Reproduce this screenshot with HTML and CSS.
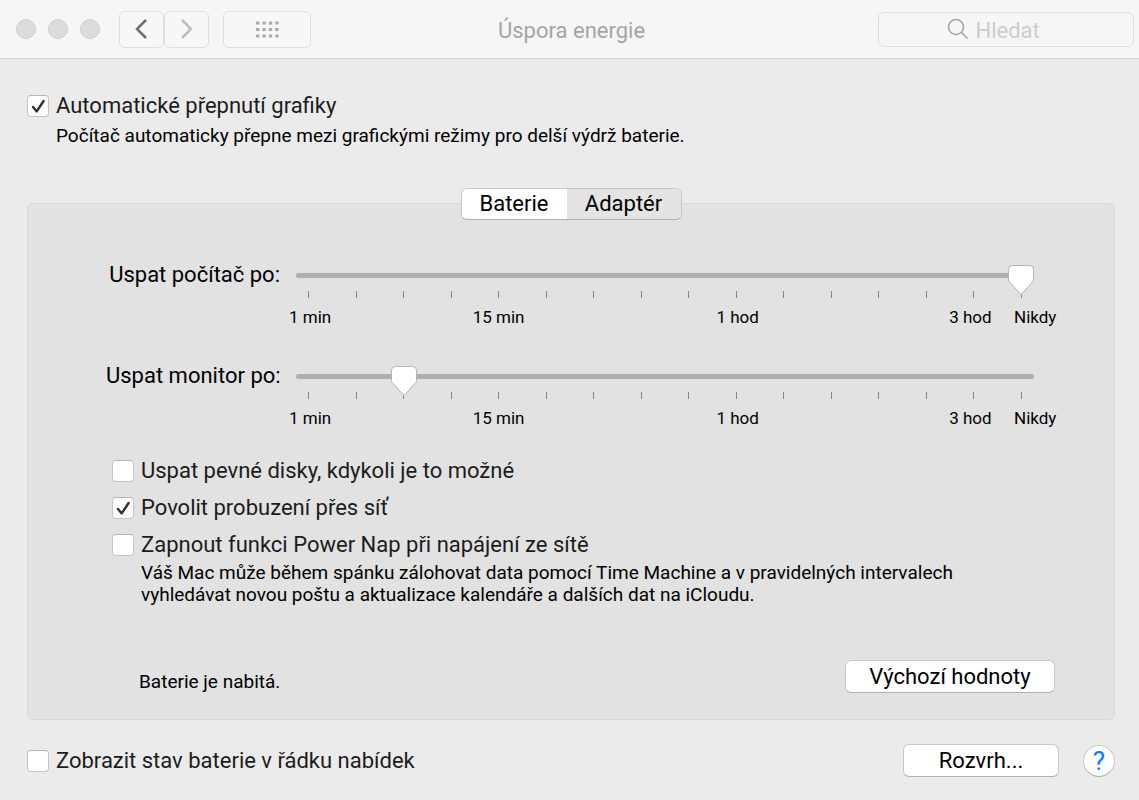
FILE: index.html
```html
<!DOCTYPE html>
<html lang="cs">
<head>
    <meta charset="UTF-8">
    <meta name="viewport" content="width=device-width, initial-scale=1.0">
    <title>Úspora energie</title>
    <link rel="stylesheet" href="styles.css">
</head>

<body>
    <header class="toolbar">
        <div class="lights">
            <button class="light" aria-label="Zavřít"></button>
            <button class="light" aria-label="Minimalizovat"></button>
            <button class="light" aria-label="Zvětšit"></button>
        </div>
        <div class="nav">
            <button class="tool-btn back" aria-label="Zpět">
                <svg width="14" height="22" viewBox="0 0 14 22"><path d="M11 2 2 11l9 9" /></svg>
            </button>
            <button class="tool-btn forward" aria-label="Vpřed">
                <svg width="14" height="22" viewBox="0 0 14 22"><path d="m2 2 9 9-9 9" /></svg>
            </button>
        </div>
        <button class="tool-btn show-all" aria-label="Zobrazit vše">
            <svg width="23" height="17" viewBox="0 0 23 17">
                <path d="M0 2h23M0 8.500h23M0 15h23" />
            </svg>
        </button>
        <h1 class="title">Úspora energie</h1>
        <label class="search">
            <svg width="22" height="22" viewBox="0 0 22 22"><circle cx="9" cy="9" r="7.5" /><path d="m14.5 14.5 6 6" /></svg>
            <input type="search" placeholder="Hledat" aria-label="Hledat">
        </label>
    </header>

    <main class="content">
        <label class="check"><input type="checkbox" checked>Automatické přepnutí grafiky</label>
        <p class="note">Počítač automaticky přepne mezi grafickými režimy pro delší výdrž baterie.</p>

        <div class="tabs" role="tablist">
            <button class="tab active" role="tab" aria-selected="true">Baterie</button>
            <button class="tab" role="tab" aria-selected="false">Adaptér</button>
        </div>

        <section class="panel">
            <div class="slider-row">
                <label for="computer">Uspat počítač po:</label>
                <div class="scale">
                    <input type="range" id="computer" min="0" max="15" value="15">
                    <div class="ticks"><i></i><i></i><i></i><i></i><i></i><i></i><i></i><i></i><i></i><i></i><i></i><i></i><i></i><i></i><i></i><i></i></div>
                    <div class="marks"><span>1 min</span><span>15 min</span><span>1 hod</span><span>3 hod</span><span>Nikdy</span></div>
                </div>
            </div>
            <div class="slider-row">
                <label for="monitor">Uspat monitor po:</label>
                <div class="scale">
                    <input type="range" id="monitor" min="0" max="15" value="2">
                    <div class="ticks"><i></i><i></i><i></i><i></i><i></i><i></i><i></i><i></i><i></i><i></i><i></i><i></i><i></i><i></i><i></i><i></i></div>
                    <div class="marks"><span>1 min</span><span>15 min</span><span>1 hod</span><span>3 hod</span><span>Nikdy</span></div>
                </div>
            </div>

            <div class="options">
                <label class="check"><input type="checkbox">Uspat pevné disky, kdykoli je to možné</label>
                <label class="check"><input type="checkbox" checked>Povolit probuzení přes síť</label>
                <label class="check"><input type="checkbox">Zapnout funkci Power Nap při napájení ze sítě</label>
            </div>
            <p class="note nap-note">Váš Mac může během spánku zálohovat data pomocí Time Machine a v pravidelných intervalech<br>
                vyhledávat novou poštu a aktualizace kalendáře a dalších dat na iCloudu.</p>

            <div class="panel-bottom">
                <p class="status">Baterie je nabitá.</p>
                <button class="btn defaults">Výchozí hodnoty</button>
            </div>
        </section>

        <footer class="bottom">
            <label class="check"><input type="checkbox">Zobrazit stav baterie v řádku nabídek</label>
            <button class="btn schedule">Rozvrh...</button>
            <button class="help" aria-label="Nápověda">?</button>
        </footer>
    </main>
</body>
</html>
```
FILE: styles.css
```css
*,*::before,*::after{
    box-sizing: border-box;
}

body{
    margin: 0;
    min-height: 100vh;
    background-color: #ebebeb;
    color: #000;
    font-family: Roboto, "Liberation Sans", sans-serif;
    font-size: 22px;
    line-height: 24px;
}

button, input{
    font: inherit;
    color: inherit;
    margin: 0;
}

p, h1{
    margin: 0;
}

/* toolbar */
.toolbar{
    display: grid;
    grid-template-columns: auto auto auto 1fr 256px;
    align-items: center;
    height: 59px;
    padding: 0 5px 0 16px;
    background-color: #f6f6f6;
    border-bottom: 1px solid #d0d0d0;
}

.lights{
    display: flex;
    gap: 12px;
}

.light{
    width: 20px;
    height: 20px;
    padding: 0;
    border: 1px solid #d0d0d0;
    border-radius: 50%;
    background-color: #dcdcdc;
}

.nav{
    display: flex;
    margin-left: 19px;
}

.tool-btn{
    display: flex;
    justify-content: center;
    align-items: center;
    width: 45px;
    height: 37px;
    padding: 0;
    border: 1px solid #dedede;
    border-radius: 6px;
    background-color: #f7f7f7;
}

.tool-btn svg, .search svg{
    fill: none;
    stroke: #6e6e6e;
    stroke-width: 2.5;
}

.tool-btn.forward svg{
    stroke: #bdbdbd;
}

.tool-btn.show-all{
    width: 88px;
    margin-left: 14px;
}

.tool-btn.show-all svg{
    stroke: #ababab;
    stroke-width: 3;
    stroke-dasharray: 3.4 3;
}

.title{
    padding: 4px 0 0 187px;
    color: #a5a5a5;
    font-size: 22px;
    font-weight: 400;
}

.search{
    display: flex;
    justify-content: center;
    align-items: center;
    gap: 7px;
    height: 35px;
    border: 1px solid #dedede;
    border-radius: 6px;
}

.search svg{
    stroke: #a5a5a5;
    stroke-width: 1.6;
}

.search input{
    width: 90px;
    height: 32px;
    padding: 2px 0 0;
    border: 0;
    outline: 0;
    background: none;
}

.search input::placeholder{
    color: #cdcdcd;
}

/* content */
.content{
    padding: 35px 24px 23px 27px;
}

.check{
    display: flex;
    align-items: center;
    gap: 7px;
    color: #1c1c1c;
}

.check input{
    appearance: none;
    width: 22px;
    height: 22px;
    border: 1px solid #c4c4c4;
    border-top-color: #b5b5b5;
    border-radius: 4px;
    background: #fff center no-repeat;
}

.check input:checked{
    background-image: url("data:image/svg+xml,%3Csvg xmlns='http://www.w3.org/2000/svg' width='20' height='20'%3E%3Cpath d='M5 11l3.7 4.4L15.6 5' fill='none' stroke='%23303030' stroke-width='2.4' stroke-linecap='round' stroke-linejoin='round'/%3E%3C/svg%3E");
}

.note, .status{
    font-size: 19px;
    line-height: 22px;
}

.note{
    padding: 7px 0 0 29px;
}

.tabs{
    position: relative;
    z-index: 1;
    display: flex;
    width: 221px;
    height: 32px;
    margin: 41px auto 0;
    border: 1px solid #c6c6c6;
    border-bottom-color: #b0b0b0;
    border-radius: 6px;
    overflow: hidden;
}

.tab{
    flex: 114;
    padding: 0;
    border: 0;
    background-color: #e4e4e4;
}

.tab.active{
    flex: 105;
    background-color: #fff;
}

.panel{
    margin-top: -17px;
    padding: 69px 57px 26px 78px;
    border: 1px solid #d8d8d8;
    border-radius: 6px;
    background-color: #e2e2e2;
}

.slider-row{
    display: grid;
    grid-template-columns: 174px 1fr;
    gap: 9px;
    height: 101px;
}

.slider-row label{
    height: 5px;
    line-height: 4px;
    text-align: right;
    white-space: nowrap;
}

.scale input{
    appearance: none;
    display: block;
    width: calc(100% - 30px);
    height: 5px;
    margin-left: 7px;
    border-radius: 3px;
    background-color: #afafaf;
}

.scale input::-webkit-slider-thumb{
    appearance: none;
    position: relative;
    width: 26px;
    height: 31px;
    margin-top: 10px;
    background: url("data:image/svg+xml,%3Csvg xmlns='http://www.w3.org/2000/svg' width='26' height='31'%3E%3Cpath d='M4.5.5h17q4 0 4 4v10q0 1.500-1 2.500L13 29.500 1.500 17q-1-1-1-2.500v-10q0-4 4-4z' fill='%23fff' stroke='%23b4b4b4'/%3E%3C/svg%3E") no-repeat;
}

.ticks{
    display: flex;
    justify-content: space-between;
    padding: 13px 35px 0 19px;
}

.ticks i{
    width: 1px;
    height: 7px;
    background-color: #858585;
}

.marks{
    display: grid;
    grid-template-columns: 184fr 244fr 233fr 65fr 43fr;
    padding-top: 9px;
    font-size: 17px;
    line-height: 20px;
    white-space: nowrap;
}

.options{
    display: flex;
    flex-direction: column;
    gap: 13px;
    margin: -16px 0 0 6px;
}

.nap-note{
    padding: 5px 0 0 35px;
}

.panel-bottom{
    display: flex;
    justify-content: space-between;
    align-items: center;
    padding: 54px 2px 0 33px;
}

.status{
    padding-top: 10px;
}

.btn{
    height: 33px;
    padding: 0;
    border: 1px solid #c8c8c8;
    border-bottom-color: #b0b0b0;
    border-radius: 6px;
    background-color: #fff;
}

.defaults{
    width: 210px;
}

.bottom{
    display: flex;
    align-items: center;
    padding-top: 24px;
}

.schedule{
    width: 156px;
    margin-left: auto;
}

.help{
    width: 32px;
    height: 32px;
    margin-left: 24px;
    padding: 0;
    border: 1px solid #c8c8c8;
    border-bottom-color: #b0b0b0;
    border-radius: 50%;
    background-color: #fff;
    color: #0a7aff;
    font-size: 26px;
}
```
